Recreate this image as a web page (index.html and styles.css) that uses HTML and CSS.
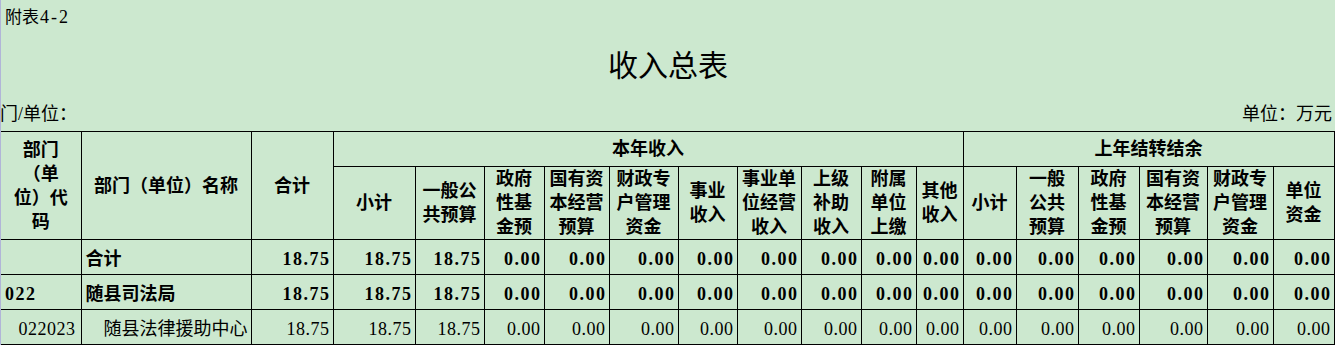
FILE: index.html
```html
<!DOCTYPE html>
<html lang="zh-CN">
<head>
<meta charset="utf-8">
<title>收入总表</title>
<link rel="stylesheet" href="styles.css">
</head>
<body>
<div class="page">
  <div class="caption">附表<span class="num">4-2</span></div>
  <h1 class="title">收入总表</h1>
  <div class="meta">
    <span class="unit-left">门/单位：</span>
    <span class="unit-right">单位：万元</span>
  </div>
  <table class="sheet">
    <colgroup>
      <col class="w80"><col class="w170"><col class="w82"><col class="w82"><col class="w69"><col class="w60"><col class="w65"><col class="w69"><col class="w59"><col class="w64"><col class="w60"><col class="w55"><col class="w47"><col class="w53"><col class="w62"><col class="w61"><col class="w68"><col class="w66"><col class="w61">
    </colgroup>
    <thead>
      <tr class="hr1">
        <th rowspan="2" class="first">部门<br>（单<br>位）代<br>码</th>
        <th rowspan="2">部门（单位）名称</th>
        <th rowspan="2">合计</th>
        <th colspan="10">本年收入</th>
        <th colspan="6">上年结转结余</th>
      </tr>
      <tr class="hr2">
        <th>小计</th>
        <th>一般公<br>共预算</th>
        <th>政府<br>性基<br>金预</th>
        <th>国有资<br>本经营<br>预算</th>
        <th>财政专<br>户管理<br>资金</th>
        <th>事业<br>收入</th>
        <th>事业单<br>位经营<br>收入</th>
        <th>上级<br>补助<br>收入</th>
        <th>附属<br>单位<br>上缴</th>
        <th>其他<br>收入</th>
        <th>小计</th>
        <th>一般<br>公共<br>预算</th>
        <th>政府<br>性基<br>金预</th>
        <th>国有资<br>本经营<br>预算</th>
        <th>财政专<br>户管理<br>资金</th>
        <th>单位<br>资金</th>
      </tr>
    </thead>
    <tbody>
      <tr class="bold">
        <td class="first"></td>
        <td class="name">合计</td>
        <td class="n">18.75</td><td class="n">18.75</td><td class="n">18.75</td>
        <td class="n">0.00</td><td class="n">0.00</td><td class="n">0.00</td><td class="n">0.00</td><td class="n">0.00</td><td class="n">0.00</td><td class="n">0.00</td><td class="n">0.00</td>
        <td class="n">0.00</td><td class="n">0.00</td><td class="n">0.00</td><td class="n">0.00</td><td class="n">0.00</td><td class="n">0.00</td>
      </tr>
      <tr class="bold">
        <td class="first code">022</td>
        <td class="name">随县司法局</td>
        <td class="n">18.75</td><td class="n">18.75</td><td class="n">18.75</td>
        <td class="n">0.00</td><td class="n">0.00</td><td class="n">0.00</td><td class="n">0.00</td><td class="n">0.00</td><td class="n">0.00</td><td class="n">0.00</td><td class="n">0.00</td>
        <td class="n">0.00</td><td class="n">0.00</td><td class="n">0.00</td><td class="n">0.00</td><td class="n">0.00</td><td class="n">0.00</td>
      </tr>
      <tr class="plain">
        <td class="first code-sub">022023</td>
        <td class="name sub">随县法律援助中心</td>
        <td class="n">18.75</td><td class="n">18.75</td><td class="n">18.75</td>
        <td class="n">0.00</td><td class="n">0.00</td><td class="n">0.00</td><td class="n">0.00</td><td class="n">0.00</td><td class="n">0.00</td><td class="n">0.00</td><td class="n">0.00</td>
        <td class="n">0.00</td><td class="n">0.00</td><td class="n">0.00</td><td class="n">0.00</td><td class="n">0.00</td><td class="n">0.00</td>
      </tr>
    </tbody>
  </table>
</div>
</body>
</html>
```

FILE: styles.css
```css
html, body {
  margin: 0;
  padding: 0;
}

body {
  background: #cce8cf;
  color: #000;
  font-family: "Liberation Serif", "Noto Sans CJK SC", serif;
  font-size: 18px;
  overflow: hidden;
}

.page {
  border-left: 1px solid #b1b5d8;
  min-height: 345px;
  box-sizing: border-box;
}

.caption {
  height: 35px;
  line-height: 35px;
  font-size: 17px;
  padding-left: 4px;
}

.caption .num {
  font-size: 18px;
  letter-spacing: 2px;
  margin-left: 1px;
}

.title {
  margin: 0;
  height: 62px;
  line-height: 62px;
  font-size: 30px;
  font-weight: 400;
  text-align: center;
}

.meta {
  display: flex;
  justify-content: space-between;
  height: 34px;
  line-height: 34px;
  font-size: 18px;
  padding-right: 3px;
}

.unit-left {
  margin-left: -1px;
}

.sheet {
  border-collapse: collapse;
  table-layout: fixed;
  width: 1333px;
}

.w80 { width: 80px; }
.w170 { width: 170px; }
.w82 { width: 82px; }
.w69 { width: 69px; }
.w60 { width: 60px; }
.w65 { width: 65px; }
.w59 { width: 59px; }
.w64 { width: 64px; }
.w55 { width: 55px; }
.w47 { width: 47px; }
.w53 { width: 53px; }
.w62 { width: 62px; }
.w61 { width: 61px; }
.w68 { width: 68px; }
.w66 { width: 66px; }

.sheet th,
.sheet td {
  border: 1px solid #000;
  padding: 0;
  overflow: hidden;
  white-space: nowrap;
}

.sheet .first {
  border-left: none;
}

.sheet th {
  font-weight: 700;
  text-align: center;
  vertical-align: middle;
  line-height: 24px;
  font-size: 18px;
}

.hr1 {
  height: 35px;
}

.hr2 {
  height: 72px;
}

.sheet tbody tr {
  height: 35px;
}

.sheet td {
  vertical-align: middle;
  padding-top: 4px;
  line-height: 26px;
}

.sheet .bold td {
  font-weight: 700;
}

.sheet .plain td {
  font-weight: 400;
}

.sheet td.n {
  text-align: right;
  padding-right: 2px;
  letter-spacing: 1.5px;
}

.sheet .plain td.n {
  letter-spacing: 0.5px;
  padding-right: 3px;
}

.sheet td.name {
  text-align: left;
  padding-left: 4px;
}

.sheet td.name.sub {
  padding-left: 22px;
}

.sheet td.code {
  text-align: left;
  padding-left: 4px;
  letter-spacing: 1.5px;
}

.sheet td.code-sub {
  text-align: right;
  padding-right: 5px;
  letter-spacing: 0.5px;
}
```
